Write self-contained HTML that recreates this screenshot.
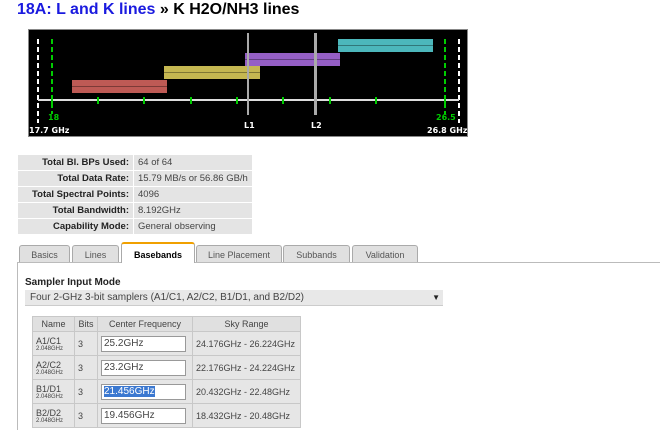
<!DOCTYPE html><html><head><style>
body{margin:0;width:660px;height:430px;overflow:hidden;background:#fff;font-family:"Liberation Sans",sans-serif;position:relative}
.a{position:absolute}
h1{position:absolute;left:17px;top:1px;margin:0;font-size:16px;font-weight:bold;color:#000;white-space:nowrap}
h1 span{color:#1a1adf}
.chart{left:28px;top:29px;width:440px;height:108px;background:#000;border:1px solid #888;box-sizing:border-box}
.bb{position:absolute;height:13px;opacity:.85}
.bb:after{content:"";position:absolute;left:0;right:0;top:6px;height:1px;background:rgba(0,0,0,.35)}
.dash{position:absolute;width:2px}
.tk{position:absolute;width:2px;height:7px;background:#0c0;top:67px}
.lbl{position:absolute;font-size:8px;font-weight:bold;font-family:"DejaVu Sans",sans-serif;white-space:nowrap}
table.s{position:absolute;left:17px;top:154px;border-collapse:collapse;font-size:9.5px;background:#e4e4e4;white-space:nowrap}
table.s td{border:1px solid #fff;height:15px;padding:0 4px;color:#444}
table.s td.l{text-align:right;font-weight:bold;color:#222;width:107px}
table.s td.v{width:110px}
.tab{position:absolute;top:245px;height:17px;background:#e0e0e0;border:1px solid #aaa;border-bottom:none;border-radius:3px 3px 0 0;font-size:9px;color:#555;text-align:center;line-height:18px;box-sizing:border-box}
.tab.on{background:#fff;top:242px;height:21px;border-top:2px solid #f0a000;color:#000;font-weight:bold;line-height:22px}
table.b{position:absolute;left:32px;top:316px;border-collapse:collapse;font-size:9px;background:#e6e6e6;color:#444;white-space:nowrap}
table.b td,table.b th{border:1px solid #c8c8c8;padding:0 3px}
table.b th{font-weight:normal;height:14px;background:#e0e0e0}
table.b td{height:23px}
.in{display:block;width:81px;height:14px;border:1px solid #999;background:#fff;font-size:10px;line-height:14px;padding-left:2px}
small{font-size:6px;display:block}
</style></head><body>
<h1><span>18A: L and K lines</span> » K H2O/NH3 lines</h1>
<div class="a chart">
<div class="dash" style="left:8px;top:9px;height:84px;background:repeating-linear-gradient(#fff 0 5px,transparent 5px 8px)"></div>
<div class="dash" style="left:429px;top:9px;height:84px;background:repeating-linear-gradient(#fff 0 5px,transparent 5px 8px)"></div>
<div class="dash" style="left:22px;top:9px;height:75px;background:repeating-linear-gradient(#0c0 0 5px,transparent 5px 8px)"></div>
<div class="dash" style="left:415px;top:9px;height:75px;background:repeating-linear-gradient(#0c0 0 5px,transparent 5px 8px)"></div>
<div class="bb" style="left:43px;top:50px;width:95px;background:#e06a64"></div>
<div class="bb" style="left:135px;top:36px;width:96px;background:#e8d860"></div>
<div class="bb" style="left:216px;top:23px;width:95px;background:#b070e8"></div>
<div class="bb" style="left:309px;top:9px;width:95px;background:#5ad8dc"></div>
<div class="a" style="left:9px;top:69px;width:421px;height:2px;background:#ddd"></div>
<div class="tk" style="left:68px"></div><div class="tk" style="left:114px"></div><div class="tk" style="left:161px"></div><div class="tk" style="left:207px"></div><div class="tk" style="left:253px"></div><div class="tk" style="left:300px"></div><div class="tk" style="left:346px"></div>
<div class="tk" style="left:22px"></div><div class="tk" style="left:415px"></div>
<div class="a" style="left:218px;top:3px;width:2px;height:82px;background:#aaa"></div>
<div class="a" style="left:285px;top:3px;width:3px;height:82px;background:#aaa"></div>
<div class="lbl" style="left:19px;top:83px;color:#0c0">18</div>
<div class="lbl" style="left:407px;top:83px;color:#0c0">26.5</div>
<div class="lbl" style="left:215px;top:91px;color:#fff">L1</div>
<div class="lbl" style="left:282px;top:91px;color:#fff">L2</div>
<div class="lbl" style="left:0px;top:96px;color:#fff">17.7 GHz</div>
<div class="lbl" style="left:398px;top:96px;color:#fff">26.8 GHz</div>
</div>
<table class="s">
<tr><td class="l">Total Bl. BPs Used:</td><td class="v">64 of 64</td></tr>
<tr><td class="l">Total Data Rate:</td><td class="v">15.79 MB/s or 56.86 GB/h</td></tr>
<tr><td class="l">Total Spectral Points:</td><td class="v">4096</td></tr>
<tr><td class="l">Total Bandwidth:</td><td class="v">8.192GHz</td></tr>
<tr><td class="l">Capability Mode:</td><td class="v">General observing</td></tr>
</table>
<div class="a" style="left:17px;top:262px;width:643px;height:1px;background:#bbb"></div>
<div class="a" style="left:17px;top:262px;width:1px;height:168px;background:#bbb"></div>
<div class="tab" style="left:19px;width:51px">Basics</div>
<div class="tab" style="left:72px;width:47px">Lines</div>
<div class="tab" style="left:196px;width:86px">Line Placement</div>
<div class="tab" style="left:283px;width:67px">Subbands</div>
<div class="tab" style="left:352px;width:66px">Validation</div>
<div class="tab on" style="left:121px;width:74px">Basebands</div>
<div class="a" style="left:25px;top:277px;font-size:10px;font-weight:bold;color:#222">Sampler Input Mode</div>
<div class="a" style="left:25px;top:290px;width:418px;height:16px;background:#e8e8e8;border-bottom:1px solid #ccc;font-size:10px;color:#444;line-height:16px;padding-left:5px;box-sizing:border-box">Four 2-GHz 3-bit samplers (A1/C1, A2/C2, B1/D1, and B2/D2)<span style="position:absolute;right:3px;top:0;font-size:8px;color:#222">▼</span></div>
<table class="b">
<tr><th style="width:35px">Name</th><th style="width:16px">Bits</th><th style="width:88px">Center Frequency</th><th style="width:101px">Sky Range</th></tr>
<tr><td>A1/C1<small>2.048GHz</small></td><td>3</td><td><span class="in">25.2GHz</span></td><td>24.176GHz - 26.224GHz</td></tr>
<tr><td>A2/C2<small>2.048GHz</small></td><td>3</td><td><span class="in">23.2GHz</span></td><td>22.176GHz - 24.224GHz</td></tr>
<tr><td>B1/D1<small>2.048GHz</small></td><td>3</td><td><span class="in"><span style="background:#3b78d0;color:#fff">21.456GHz</span></span></td><td>20.432GHz - 22.48GHz</td></tr>
<tr><td>B2/D2<small>2.048GHz</small></td><td>3</td><td><span class="in">19.456GHz</span></td><td>18.432GHz - 20.48GHz</td></tr>
</table>
</body></html>
